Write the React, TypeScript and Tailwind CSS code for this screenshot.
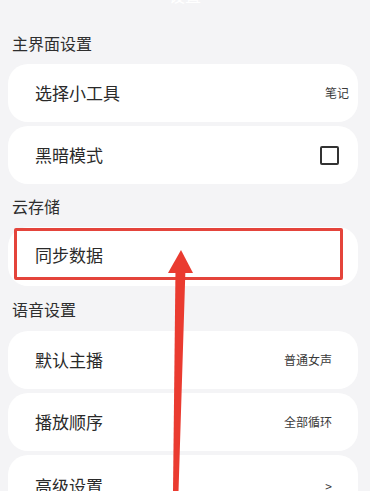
const rowText = "text-[17px] text-[#2a2a2a]";
const sideText = "text-[12px] text-[#3a3a3a]";

const SectionTitle: React.FC<{ title: string; h?: string }> = ({ title, h }) => (
  <div className={`${h ?? "h-[43px]"} flex items-center pl-1 text-[16px] text-[#2e2e2e]`}>{title}</div>
);

const Card: React.FC<{ children: React.ReactNode; className?: string }> = ({ children, className }) => (
  <div className={`relative h-[58px] bg-white rounded-[20px] flex items-center justify-between pl-[27px] ${className ?? ""}`}>
    {children}
  </div>
);

export default function App() {
  return (
    <div
      className="relative w-[370px] h-[491px] overflow-hidden bg-[#f4f4f6]"
      style={{ fontFamily: '"Noto Sans CJK SC", "Noto Sans", sans-serif' }}
    >
      <div className="h-[22px] -mt-[16px] flex justify-center text-white text-[16px] leading-[22px]">设置</div>
      <div className="pl-2 pr-3 mt-[15px] flex flex-col">
        <SectionTitle title="主界面设置" />
        <div className="flex flex-col gap-1">
          <Card className="pr-[9px]">
            <span className={rowText}>选择小工具</span>
            <span className={sideText}>笔记</span>
          </Card>
          <Card className="pr-[19px]">
            <span className={rowText}>黑暗模式</span>
            <span className="w-[19px] h-[19px] border-2 border-[#333] rounded-[2px]" />
          </Card>
        </div>
        <SectionTitle title="云存储" />
        <Card className="!h-[59px]">
          <span className={`${rowText} -mt-1`}>同步数据</span>
          <div className="absolute left-[6px] top-[1px] right-[15px] bottom-[6px] border-[3px] border-[#e4443b] rounded-[2px]" />
        </Card>
        <SectionTitle title="语音设置" h="h-[45px]" />
        <div className="flex flex-col gap-1">
          <Card className="pr-[26px]">
            <span className={rowText}>默认主播</span>
            <span className={sideText}>普通女声</span>
          </Card>
          <Card className="pr-[26px]">
            <span className={rowText}>播放顺序</span>
            <span className={sideText}>全部循环</span>
          </Card>
          <Card className="pr-[26px] items-start pt-[18px]">
            <span className={rowText}>高级设置</span>
            <span className={`${sideText} mt-[4px]`}>&gt;</span>
          </Card>
        </div>
      </div>
      <svg className="absolute inset-0 pointer-events-none" width="370" height="491" viewBox="0 0 370 491">
        <polygon points="173,491 178.5,491 185.5,268 175.5,268" fill="#ea3b30" />
        <polygon points="181,250 193,273 168,273" fill="#ea3b30" />
      </svg>
    </div>
  );
}
